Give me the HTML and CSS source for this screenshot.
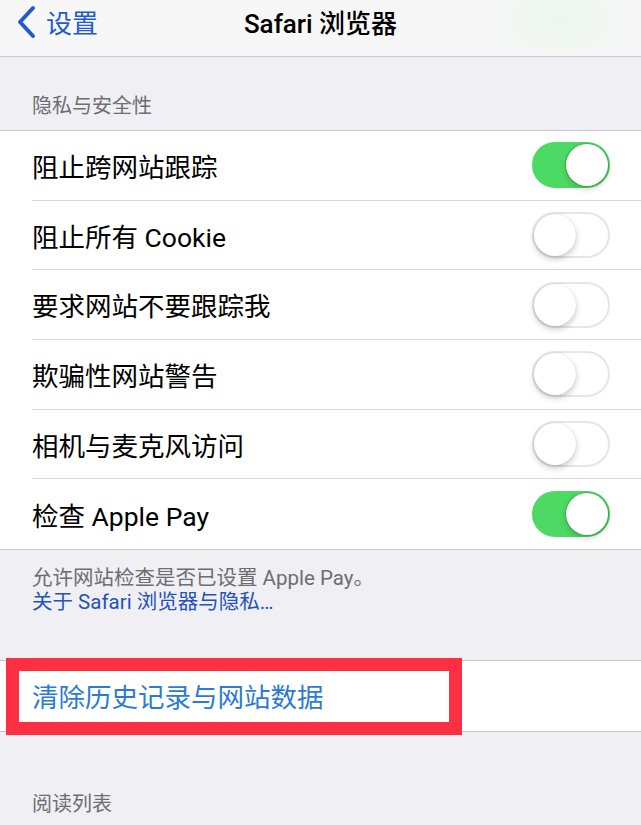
FILE: index.html
```html
<!DOCTYPE html>
<html lang="zh-CN">
<head>
  <meta charset="UTF-8" />
  <meta name="viewport" content="width=device-width, initial-scale=1.0" />
  <title>Safari 浏览器</title>
  <link rel="stylesheet" href="styles.css">
</head>
<body>

  <div class="navbar">
    <a class="back" href="#">
      <svg width="22" height="34" viewBox="0 0 22 34">
        <polyline points="17,3 4,17 17,31" fill="none" stroke="#1f5bd0" stroke-width="4" stroke-linecap="round" stroke-linejoin="round" />
      </svg>
      <span>设置</span>
    </a>
    <div class="title">Safari 浏览器</div>
  </div>

  <div class="group-header">隐私与安全性</div>
  <div class="group">
    <div class="row">
      <span>阻止跨网站跟踪</span>
      <div class="switch on"><div class="knob"></div></div>
    </div>
    <div class="row">
      <span>阻止所有 Cookie</span>
      <div class="switch"><div class="knob"></div></div>
    </div>
    <div class="row">
      <span>要求网站不要跟踪我</span>
      <div class="switch"><div class="knob"></div></div>
    </div>
    <div class="row">
      <span>欺骗性网站警告</span>
      <div class="switch"><div class="knob"></div></div>
    </div>
    <div class="row">
      <span>相机与麦克风访问</span>
      <div class="switch"><div class="knob"></div></div>
    </div>
    <div class="row">
      <span>检查 Apple Pay</span>
      <div class="switch on"><div class="knob"></div></div>
    </div>
  </div>
  <div class="group-footer">
    <div>允许网站检查是否已设置 Apple Pay。</div>
    <a href="#">关于 Safari 浏览器与隐私…</a>
  </div>

  <div class="group clear-group">
    <div class="row action">清除历史记录与网站数据</div>
    <div class="highlight"></div>
  </div>

  <div class="group-header reading">阅读列表</div>

</body>
</html>
```

FILE: styles.css
```css
* {
  box-sizing: border-box;
}

body {
  margin: 0;
  background: #efeff4;
  font-family: Roboto, "Noto Sans CJK SC", sans-serif;
  overflow: hidden;
}

.navbar {
  position: relative;
  height: 57px;
  background: #f7f7f8;
  background-image: radial-gradient(ellipse 80px 50px at 560px 20px, rgba(215, 245, 220, 0.35), rgba(215, 245, 220, 0));
  border-bottom: 1px solid #c9c9ce;
  display: flex;
  align-items: center;
  justify-content: center;
}

.back {
  position: absolute;
  left: 16px;
  top: 3px;
  display: flex;
  align-items: center;
  gap: 8px;
  color: #1f5bd0;
  text-decoration: none;
  font-size: 26px;
}

.title {
  font-size: 26px;
  font-weight: 500;
  color: #000;
  margin-top: -13px;
}

.group-header {
  padding: 37px 32px 11px;
  font-size: 20px;
  line-height: 25px;
  color: #6d6d72;
}

.group-header.reading {
  padding-top: 60px;
}

.group {
  background: #fff;
  border-top: 1px solid #c8c7cc;
  border-bottom: 1px solid #c8c7cc;
}

.row {
  height: 69.7px;
  margin-left: 32px;
  padding-right: 31px;
  display: flex;
  align-items: center;
  justify-content: space-between;
  border-bottom: 1px solid #d6d6da;
  font-size: 26.5px;
  color: #000;
}

.row:last-child {
  border-bottom: none;
}

.switch {
  width: 78px;
  height: 46px;
  border-radius: 23px;
  background: #fff;
  border: 2px solid #e6e6ea;
  position: relative;
}

.switch .knob {
  position: absolute;
  top: 0;
  left: 0;
  width: 42px;
  height: 42px;
  border-radius: 50%;
  background: #fff;
  box-shadow: 0 3px 6px rgba(0, 0, 0, 0.22), 0 0 1px rgba(0, 0, 0, 0.15);
}

.switch.on {
  background: #4cd964;
  border-color: #4cd964;
}

.switch.on .knob {
  left: 32px;
  box-shadow: 0 3px 6px rgba(0, 0, 0, 0.18), 0 0 0 1px rgba(60, 150, 70, 0.5);
}

.group-footer {
  padding: 16px 32px 0;
  font-size: 20.5px;
  line-height: 24px;
  color: #6d6d72;
}

.group-footer a {
  color: #2452bd;
  text-decoration: none;
}

.clear-group {
  position: relative;
  margin-top: 46px;
}

.row.action {
  color: #2b7bd6;
  border-bottom: none;
}

/* red marker drawn around the clear-data row */
.highlight {
  position: absolute;
  left: 6px;
  top: -3px;
  width: 456px;
  height: 77px;
  border: 13px solid #fc2f43;
}
```
